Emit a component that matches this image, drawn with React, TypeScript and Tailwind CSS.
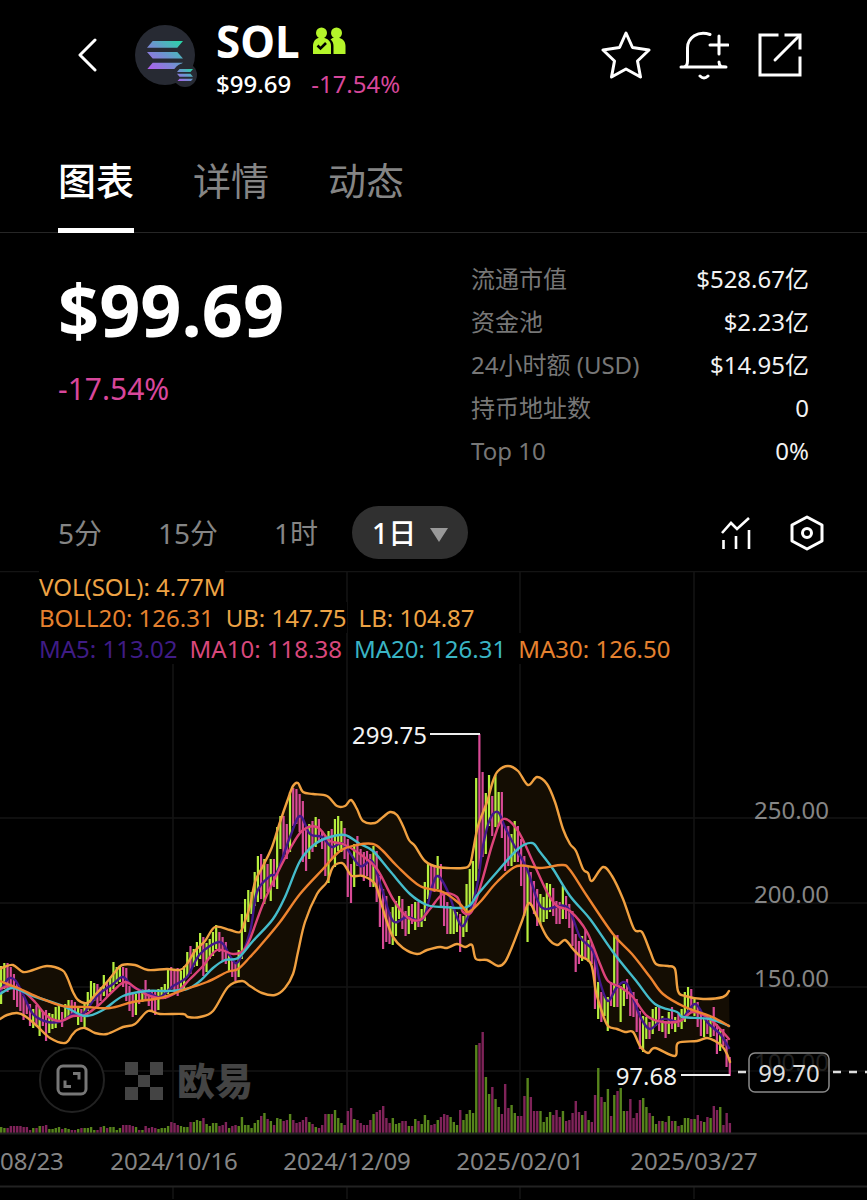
import clsx from "clsx";

type Point = [number, number];

const tabs = ["图表", "详情", "动态"];

const stats = [
  { label: "流通市值", value: "$528.67亿" },
  { label: "资金池", value: "$2.23亿" },
  { label: "24小时额 (USD)", value: "$14.95亿" },
  { label: "持币地址数", value: "0" },
  { label: "Top 10", value: "0%" },
];

const intervals = ["5分", "15分", "1时"];

const legend = [
  [{ text: "VOL(SOL): 4.77M", color: "text-[#eda345]" }],
  [
    { text: "BOLL20: 126.31", color: "text-[#e5812f]" },
    { text: "UB: 147.75", color: "text-[#eda345]" },
    { text: "LB: 104.87", color: "text-[#eda345]" },
  ],
  [
    { text: "MA5: 113.02", color: "text-[#3f1c85]" },
    { text: "MA10: 118.38", color: "text-[#d9487c]" },
    { text: "MA20: 126.31", color: "text-[#3ab4c4]" },
    { text: "MA30: 126.50", color: "text-[#e5812f]" },
  ],
];

// one entry per day: u(p) or d(own), top, bottom, volume height
const candleData = `
u967-1005-6 u964-990-5 d964-993-5 d968-990-7 d975-1001-7 d985-1008-7 d990-1012-7 d997-1021-6 d1003-1015-6 d1005-1027-3
u1010-1029-5 d1006-1026-5 u1009-1037-7 d1012-1027-7 d1011-1042-8 u1014-1034-4 u1015-1030-4 u1008-1029-5 u1006-1022-6 d1013-1028-4
u1005-1021-5 u1001-1018-4 d1001-1015-3 d1003-1017-3 u1008-1026-4 d1010-1023-5 u1005-1029-5 u993-1012-5 u982-1005-6 u984-1002-3
d985-1007-3 d988-1002-6 u976-997-7 d983-998-5 u978-993-6 u963-990-6 u968-985-3 u967-983-5 d968-988-8 d969-1002-8
d987-1012-8 d993-1018-7 u995-1016-6 d992-1005-3 u990-1003-3 d981-1000-7 d990-1007-5 d992-1012-6 d993-1016-5 u990-1011-4
u988-1000-5 u985-1000-5 u969-995-7 d968-990-11 d970-993-10 d969-997-8 u972-993-7 u967-990-6 u953-978-6 d947-975-11
u950-968-11 u943-967-13 u934-960-12 d938-977-15 u944-973-9 u940-960-7 u933-957-10 u926-950-10 d933-953-7 d938-962-8
d943-965-11 u955-972-5 d960-978-7 d963-982-8 u951-978-7 u915-960-16 u900-933-8 u891-923-8 u893-915-5 u873-907-10
u857-903-13 d855-900-17 u860-905-20 d865-893-14 u860-902-12 d860-888-8 u828-890-15 u817-850-14 d817-857-12 d825-860-13
u793-853-19 d789-827-13 d790-825-10 d795-833-11 d802-863-13 d830-872-16 u825-860-11 d822-853-9 u818-848-6 d820-843-5
d832-850-8 d838-877-19 u832-884-19 d830-860-19 u820-868-23 u817-852-15 u822-853-10 d829-860-8 d840-898-22 d865-904-25
u845-888-14 d837-867-13 d850-877-10 d853-882-8 d852-877-8 d855-888-13 u847-888-19 d852-903-21 d877-928-23 d890-950-27
d897-943-15 d913-945-10 u908-946-15 u902-937-9 u897-920-10 d900-930-12 d912-937-12 u907-935-7 d905-925-7 u903-931-14
d903-928-12 u910-928-9 u883-922-18 u865-900-13 d867-893-8 d867-893-9 u857-890-13 d865-907-16 d893-927-19 d903-935-18
u907-935-16 u908-935-11 u913-933-8 d915-953-23 u917-938-13 u885-933-19 u870-907-23 u862-910-20 u779-882-88 d735-870-90
d773-858-101 u794-855-56 u776-827-39 d797-837-46 u776-828-34 u793-827-26 d793-839-19 d827-872-49 d827-867-25 u835-867-28
u822-863-20 d827-863-17 d840-887-17 d857-917-37 u868-943-55 d873-907-36 d882-915-22 d890-927-22 u895-925-22 u898-923-11
u884-920-16 u885-913-21 d889-917-18 d902-925-23 d903-925-16 u887-920-22 d897-920-12 d905-929-13 d912-947-20 d935-973-32
d942-965-21 u937-962-18 d930-960-22 u941-963-13 d943-965-11 d957-1010-38 u983-1020-65 d993-1023-36 u997-1017-31 u998-1032-44
d983-1007-17 u937-1008-38 d936-1008-42 u987-1023-45 u985-1007-22 d980-1000-22 d992-1017-34 d993-1018-15 d1000-1033-20 d1012-1050-33
u1017-1053-35 u1018-1040-26 d1023-1040-20 u1010-1035-17 u1008-1027-9 d1007-1032-12 u1017-1033-12 d1022-1039-11 u1013-1035-17 d1008-1030-12
u1018-1033-12 d1015-1028-7 u1010-1030-8 u993-1023-15 u988-1013-15 d990-1013-14 u1000-1017-14 d1003-1028-18 d1013-1037-12 u1018-1038-11
d1017-1035-16 u1018-1038-15 d1008-1037-27 d1025-1055-23 u1030-1052-26 d1030-1047-8 d1040-1068-20 d1058-1077-10`;

const candles = candleData
  .trim()
  .split(/\s+/)
  .map((entry, index) => {
    const [top, bottom, volume] = entry.slice(1).split("-").map(Number);
    return { x: index * 3.21, up: entry[0] === "u", top, bottom, volume };
  });

const upperBand: Point[] = [
  [0, 970], [4, 968], [13, 966], [23, 973], [33, 971], [47, 967], [62, 971], [67, 978], [73, 993], [78, 1001],
  [87, 1004], [95, 996], [107, 983], [115, 973], [122, 966], [135, 966], [148, 971], [167, 970], [180, 971], [187, 965],
  [195, 952], [205, 942], [215, 928], [230, 931], [240, 933], [245, 922], [250, 907], [255, 883], [263, 867], [272, 848],
  [280, 823], [288, 800], [293, 787], [298, 784], [303, 793], [313, 795], [327, 797], [337, 807], [345, 807], [351, 801],
  [357, 810], [363, 822], [375, 824], [383, 818], [390, 813], [397, 816], [403, 827], [409, 841], [415, 847], [425, 862],
  [438, 868], [463, 869], [470, 865], [473, 852], [478, 827], [487, 803], [493, 782], [498, 772], [508, 767], [518, 772],
  [528, 786], [537, 778], [547, 785], [555, 803], [563, 830], [570, 845], [576, 852], [583, 870], [588, 874], [592, 882],
  [603, 868], [612, 877], [623, 900], [634, 930], [642, 933], [650, 952], [656, 965], [668, 967], [675, 970], [678, 992],
  [685, 997], [703, 1000], [723, 998], [729, 992],
];

const lowerBand: Point[] = [
  [0, 1020], [7, 1016], [17, 1014], [25, 1017], [37, 1027], [50, 1039], [65, 1044], [72, 1036], [77, 1031], [85, 1029],
  [95, 1034], [107, 1035], [123, 1028], [135, 1025], [148, 1012], [160, 1015], [183, 1015], [188, 1018], [200, 1018], [213, 1012],
  [228, 988], [242, 982], [250, 987], [262, 994], [275, 996], [285, 989], [293, 975], [298, 953], [305, 923], [317, 895],
  [327, 883], [333, 868], [342, 864], [347, 870], [352, 877], [363, 877], [375, 885], [382, 907], [387, 923], [393, 938],
  [403, 949], [417, 955], [427, 951], [440, 948], [447, 949], [457, 945], [465, 948], [472, 946], [476, 960], [487, 961],
  [498, 967], [505, 963], [512, 948], [522, 922], [529, 904], [537, 918], [547, 938], [557, 946], [565, 941], [573, 950],
  [580, 957], [591, 965], [596, 993], [602, 1013], [608, 1027], [617, 1030], [625, 1033], [633, 1033], [640, 1047], [648, 1054],
  [655, 1049], [675, 1057], [678, 1044], [697, 1042], [707, 1039], [715, 1042], [722, 1047], [727, 1055], [730, 1063],
];

const ma5: Point[] = [
  [0, 993], [8, 980], [15, 981], [23, 995], [33, 1015], [48, 1023], [62, 1022], [73, 1015], [83, 1015], [97, 997],
  [113, 985], [123, 978], [133, 988], [147, 993], [160, 998], [173, 987], [187, 978], [200, 955], [220, 943], [230, 957],
  [238, 963], [250, 933], [257, 893], [270, 877], [277, 873], [290, 838], [300, 817], [310, 835], [322, 838], [332, 848],
  [343, 845], [360, 867], [372, 862], [382, 890], [393, 922], [407, 918], [423, 920], [432, 888], [438, 877], [448, 893],
  [460, 925], [467, 920], [477, 887], [483, 847], [490, 820], [498, 813], [505, 828], [515, 848], [527, 870], [537, 900],
  [545, 910], [567, 908], [580, 938], [593, 952], [600, 983], [608, 1002], [617, 988], [627, 985], [640, 1017], [650, 1030],
  [663, 1020], [680, 1022], [695, 1005], [707, 1023], [720, 1035], [729, 1049],
];

const ma10: Point[] = [
  [0, 990], [10, 987], [23, 992], [35, 1003], [47, 1017], [60, 1022], [73, 1017], [85, 1016], [100, 1005], [113, 992],
  [125, 983], [137, 990], [150, 997], [163, 999], [177, 993], [190, 980], [203, 967], [217, 951], [233, 955], [243, 952],
  [250, 940], [263, 905], [277, 875], [290, 850], [302, 832], [317, 828], [330, 842], [343, 845], [360, 855], [377, 870],
  [393, 900], [407, 918], [420, 921], [430, 910], [443, 895], [457, 898], [463, 913], [472, 912], [482, 882], [493, 843],
  [503, 820], [518, 832], [533, 863], [547, 893], [557, 907], [570, 912], [587, 933], [600, 965], [608, 982], [620, 988],
  [632, 997], [647, 1017], [663, 1023], [680, 1022], [693, 1013], [710, 1020], [729, 1040],
];

const ma20: Point[] = [
  [0, 995], [13, 989], [33, 997], [63, 1007], [85, 1017], [103, 1011], [123, 997], [147, 992], [167, 992], [187, 990],
  [200, 982], [213, 969], [225, 961], [238, 959], [253, 942], [273, 920], [285, 898], [300, 862], [315, 845], [330, 838],
  [345, 836], [360, 845], [373, 852], [390, 872], [410, 895], [427, 906], [443, 908], [467, 908], [478, 895], [497, 873],
  [518, 850], [532, 844], [540, 853], [553, 870], [570, 897], [590, 920], [613, 953], [637, 983], [655, 1005], [677, 1013],
  [683, 1018], [710, 1020], [729, 1027],
];

const ma30: Point[] = [
  [0, 982], [20, 990], [40, 999], [63, 1007], [87, 1008], [110, 1009], [133, 1003], [160, 999], [183, 991], [207, 983],
  [227, 973], [238, 970], [250, 958], [260, 947], [280, 923], [300, 895], [323, 870], [340, 852], [357, 846], [373, 845],
  [383, 852], [397, 867], [420, 887], [443, 893], [460, 905], [468, 913], [480, 903], [497, 883], [517, 867], [540, 869],
  [562, 866], [570, 871], [587, 897], [613, 935], [632, 955], [650, 978], [663, 995], [685, 1008], [710, 1017], [729, 1027],
];

const toPoints = (points: Point[]) => points.map((p) => p.join(",")).join(" ");

// Catmull-Rom curve through the points
const toCurve = (points: Point[]) => {
  let d = `M${points[0].join(",")}`;
  for (let i = 0; i < points.length - 1; i++) {
    const a = points[i - 1] ?? points[i];
    const b = points[i];
    const c = points[i + 1];
    const e = points[i + 2] ?? c;
    d += `C${b[0] + (c[0] - a[0]) / 6},${b[1] + (c[1] - a[1]) / 6}`;
    d += ` ${c[0] - (e[0] - b[0]) / 6},${c[1] - (e[1] - b[1]) / 6} ${c[0]},${c[1]}`;
  }
  return d;
};

const lines = [
  { points: ma5, color: "#42188a" },
  { points: upperBand, color: "#f0a040" },
  { points: lowerBand, color: "#f0a040" },
  { points: ma10, color: "#dc4379" },
  { points: ma20, color: "#45bccb" },
  { points: ma30, color: "#ee842f" },
];

const gridX = [173, 347, 520, 694];
const gridY = [819, 904, 988, 1072];

const priceLabels = [
  { text: "250.00", y: 820 },
  { text: "200.00", y: 904 },
  { text: "150.00", y: 988 },
];

const dateLabels = [
  { text: "2024/08/23", x: 0 },
  { text: "2024/10/16", x: 174 },
  { text: "2024/12/09", x: 347 },
  { text: "2025/02/01", x: 520 },
  { text: "2025/03/27", x: 694 },
];

const SolanaMark = ({ id, className }: { id: string; className: string }) => (
  <svg viewBox="0 0 38 30" className={className} aria-hidden="true">
    <defs>
      <linearGradient id={id} x1="0" y1="1" x2="1" y2="0">
        <stop offset="0" stopColor="#b35cf0" />
        <stop offset="0.5" stopColor="#6e93d0" />
        <stop offset="1" stopColor="#25d9a5" />
      </linearGradient>
    </defs>
    <path
      d="M6 0H38L32 7H0ZM0 11.500H32L38 18.500H6ZM6 23H38L32 30H0Z"
      fill={`url(#${id})`}
    />
  </svg>
);

const Header = () => (
  <header className="flex items-center pt-2 pr-16 pl-[70px]">
    <button aria-label="返回" className="flex w-9 justify-center">
      <svg viewBox="0 0 20 34" className="h-[34px] w-5" fill="none" stroke="#fff" strokeWidth="3" strokeLinecap="round" strokeLinejoin="round">
        <path d="M17 2L2 17L17 32" />
      </svg>
    </button>

    <div className="relative ml-[29px] flex size-[60px] items-center justify-center rounded-full bg-[#272a33]">
      <SolanaMark id="sol-main" className="w-9" />
      <div className="absolute -right-0.5 -bottom-0.5 flex size-6 items-center justify-center rounded-full bg-[#272a33]">
        <SolanaMark id="sol-chain" className="w-4" />
      </div>
    </div>

    <div className="ml-[21px] flex-1 pt-2">
      <div className="flex items-center gap-3">
        <h1 className="text-[44px] leading-[50px] font-bold">SOL</h1>
        <svg viewBox="0 0 34 28" className="h-7 w-[34px]" fill="#b5f52a" aria-label="社区认证">
          <circle cx="9.500" cy="6" r="5.500" />
          <path d="M1 27V19C1 14 4 11.500 6.500 11H12.500C16 12 19 14.500 19 19V27Z" />
          <circle cx="24.500" cy="6" r="5.500" />
          <path d="M20.500 11H27.500C31 12 33.500 14.500 33.500 19V27H21.500V19C21.500 16 20.500 14 18.500 12.500Z" />
          <path d="M5.500 18.500L8.500 21.500L14 16" fill="none" stroke="#000" strokeWidth="2.600" />
        </svg>
      </div>
      <div className="flex gap-5 text-2xl leading-9">
        <span className="font-medium">$99.69</span>
        <span className="text-[#d8479b]">-17.54%</span>
      </div>
    </div>

    <div className="flex items-center gap-7">
      <button aria-label="收藏">
        <svg viewBox="0 0 50 50" className="size-[50px]" fill="none" stroke="#fff" strokeWidth="3" strokeLinejoin="round">
          <path d="M25 3L31.500 17.500L48 20L36.500 31L39.500 47L25 39L10.500 47L13.500 31L2 20L18.500 17.500Z" />
        </svg>
      </button>
      <button aria-label="价格提醒">
        <svg viewBox="0 0 50 50" className="size-[50px]" fill="none" stroke="#fff" strokeWidth="3" strokeLinecap="round">
          <path d="M31 4.500C19 0 8.500 8 8.500 18V31C8.500 34 7.500 36.500 5 37H2H47L42 36.500Q40 35 40 32" strokeLinejoin="round" />
          <path d="M40 6V24M31 15H49M21 46Q25 50 29 46" />
        </svg>
      </button>
      <button aria-label="分享">
        <svg viewBox="0 0 46 46" className="size-[46px]" fill="none" stroke="#fff" strokeWidth="3" strokeLinecap="square">
          <path d="M20 3H3V43H43V26M29 3H43V16" />
          <path d="M42 4L18 28" strokeLinecap="round" />
        </svg>
      </button>
    </div>
  </header>
);

const Tabs = () => (
  <nav className="mt-12 flex gap-[59px] border-b border-[#262626] pl-[58px]">
    {tabs.map((tab, index) => (
      <a
        key={tab}
        href="#"
        className={clsx(
          "-mb-px border-b-[5px] pb-[18px] text-[38px] leading-[60px]",
          index === 0 ? "border-white font-medium text-white" : "border-transparent text-[#858585]",
        )}
      >
        {tab}
      </a>
    ))}
  </nav>
);

const Summary = () => (
  <section className="flex justify-between px-[58px] pt-6">
    <div>
      <div className="text-[72px] leading-[104px] font-bold">$99.69</div>
      <div className="mt-2 text-[30px] leading-10 text-[#d8479b]">-17.54%</div>
    </div>
    <dl className="w-[338px] text-2xl leading-[43px]">
      {stats.map((stat) => (
        <div key={stat.label} className="flex justify-between">
          <dt className="text-[#777]">{stat.label}</dt>
          <dd className="text-[#f2f2f2]">{stat.value}</dd>
        </div>
      ))}
    </dl>
  </section>
);

const IntervalBar = () => (
  <div className="mt-[34px] flex items-center pr-[42px] pb-3 pl-[58px] text-[28px] text-[#858585]">
    <div className="flex gap-14">
      {intervals.map((interval) => (
        <button key={interval}>{interval}</button>
      ))}
    </div>
    <button className="ml-[34px] flex h-[53px] items-center gap-3.5 rounded-full bg-[#303030] px-5 font-medium text-white">
      1日
      <svg viewBox="0 0 18 14" className="mt-1 w-[18px]" fill="#999" aria-hidden="true">
        <path d="M0 0H18L9 14Z" />
      </svg>
    </button>
    <div className="ml-auto flex items-center gap-[37px]">
      <button aria-label="指标">
        <svg viewBox="0 0 32 34" className="h-[34px] w-8" fill="none" stroke="#fff" strokeWidth="2.600">
          <path d="M2 17L11 7L17 13L29 2" />
          <path d="M3.500 24V33M16 20V33M29 14V33" />
        </svg>
      </button>
      <button aria-label="设置">
        <svg viewBox="0 0 36 36" className="size-9" fill="none" stroke="#fff" strokeWidth="3" strokeLinejoin="round">
          <path d="M18 2L33 10V26L18 34L3 26V10Z" />
          <circle cx="18" cy="18" r="4.500" />
        </svg>
      </button>
    </div>
  </div>
);

const Chart = () => (
  <section className="relative">
    <svg viewBox="0 572 867 628" className="block w-full" fontSize="24" role="img" aria-label="SOL 日线图">
      <g stroke="#141414" strokeWidth="1.500">
        <path d="M0 572.500H867" />
        {gridX.map((x) => (
          <path key={x} d={`M${x} 572V1134M${x} 1188V1200`} />
        ))}
        {gridY.map((y) => (
          <path key={y} d={`M0 ${y}H867`} />
        ))}
      </g>

      <g fill="#444">
        <path d="M125 1063h13v13h-13zM150 1063h13v13h-13zM138 1076h12v12h-12zM125 1088h13v13h-13zM150 1088h13v13h-13z" />
        <text x="177" y="1096" fontSize="38" fontWeight="900">
          欧易
        </text>
      </g>

      <polygon points={toPoints([...upperBand, ...[...lowerBand].reverse()])} fill="#140d03" />

      {candles.map(({ x, up, top, bottom, volume }) => (
        <g key={x}>
          <rect x={x} y={top} width="2.200" height={bottom - top} fill={up ? "#b6ee3e" : "#d84a96"} />
          <rect x={x} y={1134 - volume} width="2.400" height={volume} fill={up ? "#57841c" : "#7f2359"} />
        </g>
      ))}

      {lines.map(({ points, color }, index) => (
        <path key={index} d={toCurve(points)} fill="none" stroke={color} strokeWidth="2.400" strokeLinecap="round" />
      ))}

      <path d="M0 1134.500H867M0 1187.500H867" stroke="#222" strokeWidth="2" />

      <g fill="#858585">
        {priceLabels.map((label) => (
          <text key={label.text} x="754" y={label.y}>
            {label.text}
          </text>
        ))}
        <text x="754" y="1072" fill="#363636">
          100.00
        </text>
        {dateLabels.map((label) => (
          <text key={label.text} x={label.x} y="1171" textAnchor="middle">
            {label.text}
          </text>
        ))}
      </g>

      <path d="M430 735H480M681 1076H730" stroke="#eee" strokeWidth="2.200" />
      <g fill="#f2f2f2">
        <text x="427" y="745" textAnchor="end">
          299.75
        </text>
        <text x="677" y="1086" textAnchor="end">
          97.68
        </text>
      </g>

      <path d="M738 1073H746M833 1073H867" stroke="#ddd" strokeWidth="2.500" strokeDasharray="8 8" />
      <rect x="749" y="1054" width="80" height="39" rx="6" fill="#000" fillOpacity="0.4" stroke="#8a8a8a" strokeWidth="1.500" />
      <text x="789" y="1083" textAnchor="middle" fill="#e0e0e0">
        99.70
      </text>
    </svg>

    <div className="absolute top-0 left-[39px] text-2xl leading-[31px]">
      {legend.map((row, index) => (
        <div key={index} className="flex gap-3">
          {row.map((item) => (
            <span key={item.text} className={clsx("bg-black", item.color)}>
              {item.text}
            </span>
          ))}
        </div>
      ))}
    </div>

    <button
      aria-label="全屏"
      className="absolute bottom-[86px] left-[39px] flex size-[66px] items-center justify-center rounded-full border-2 border-[#222] bg-black"
    >
      <svg viewBox="0 0 32 32" className="size-8" fill="none" stroke="#777" strokeWidth="3">
        <rect x="2" y="2" width="28" height="28" rx="5" />
        <path d="M17 9.500H23V15.500M9 16.500V22.500H15" />
      </svg>
    </button>
  </section>
);

export default function App() {
  return (
    <main className="min-h-screen overflow-hidden bg-black font-['Noto_Sans','Noto_Sans_CJK_SC',sans-serif] text-white">
      <Header />
      <Tabs />
      <Summary />
      <IntervalBar />
      <Chart />
    </main>
  );
}
